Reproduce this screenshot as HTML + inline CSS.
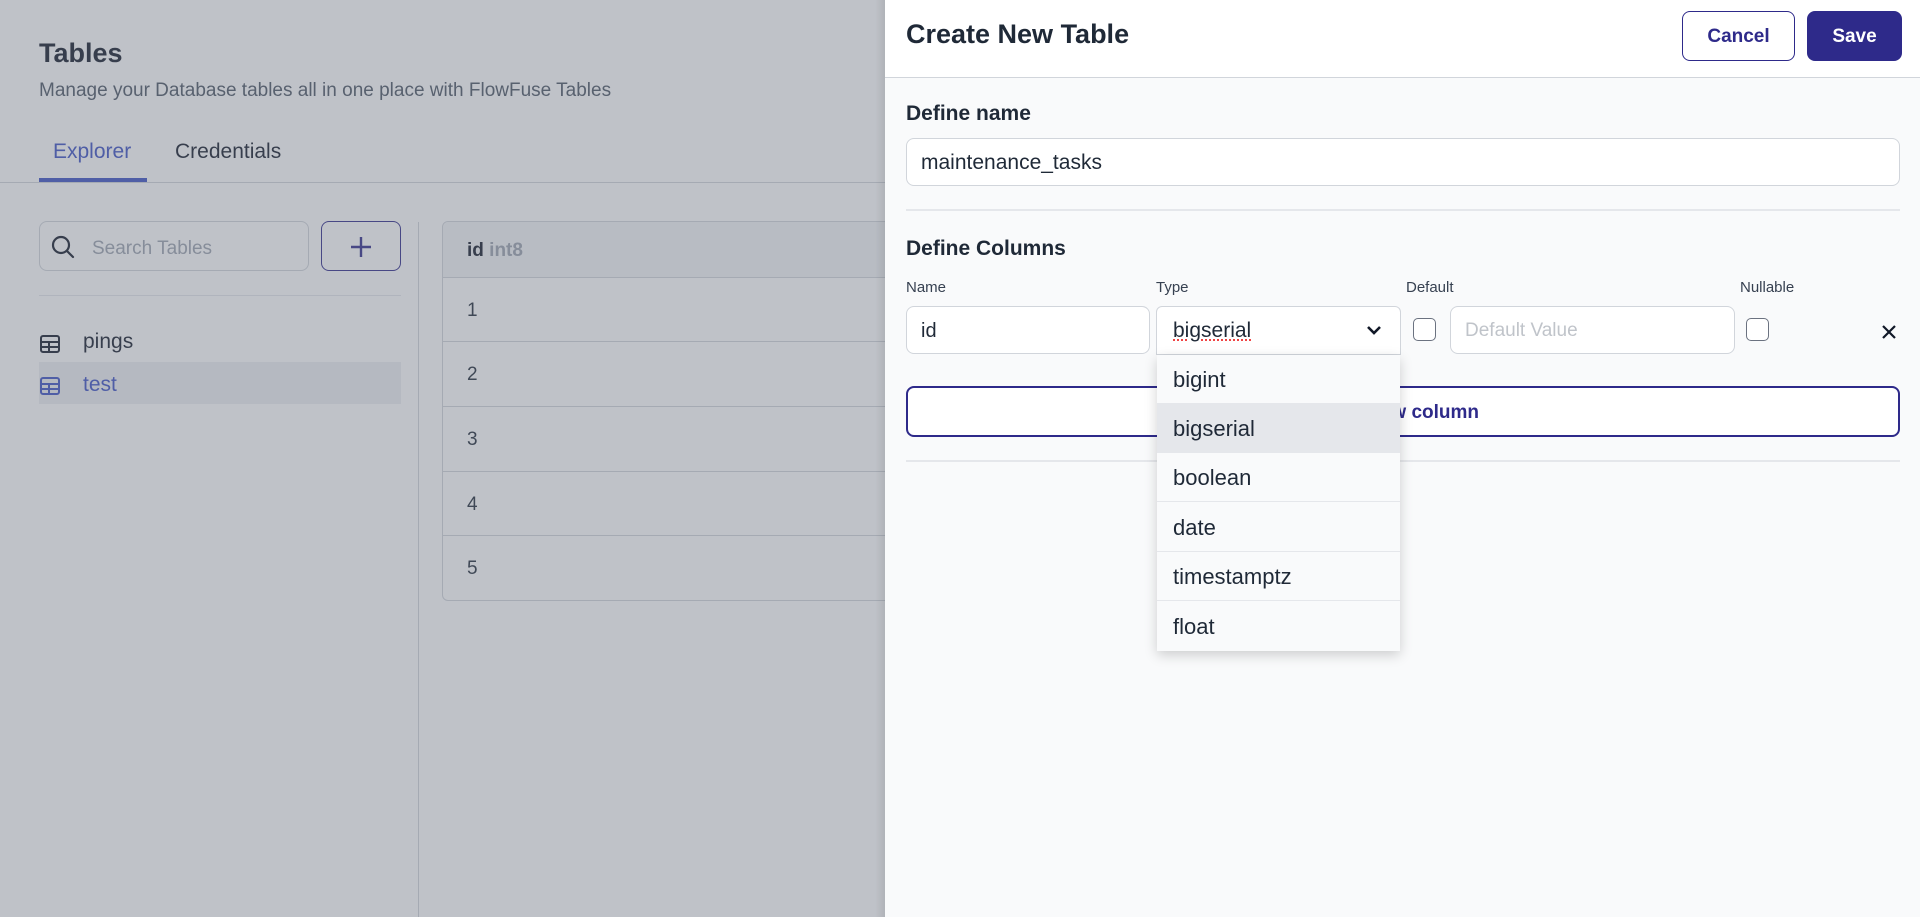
<!DOCTYPE html>
<html><head><meta charset="utf-8"><style>
*{box-sizing:border-box;margin:0;padding:0}
body{width:1920px;height:917px;overflow:hidden;position:relative;background:#fff;font-family:"Liberation Sans",sans-serif;color:#1f2937}
.a{position:absolute}
.ov{position:absolute;left:0;top:0;width:885px;height:917px;background:rgba(107,114,128,0.43)}
.inp{position:absolute;background:#fff;border:1px solid #d1d5db;border-radius:6px}
.row{position:absolute;left:442px;width:460px;border-top:1px solid #d1d5db;font-size:19px;padding-left:25px}
.dd{position:absolute;left:1157px;width:243px;height:49px;border-bottom:1px solid #e5e7eb;font-size:22px;padding-left:16px;line-height:50px;color:#1f2937}
</style></head><body>
<div class="a" style="left:39px;top:38px;font-size:27px;font-weight:bold;color:#111827">Tables</div>
<div class="a" style="left:39px;top:80px;font-size:19px;color:#4b5563">Manage your Database tables all in one place with FlowFuse Tables</div>
<div class="a" style="left:53px;top:140px;font-size:21px;color:#3b4fc4">Explorer</div>
<div class="a" style="left:175px;top:140px;font-size:21px;color:#111827">Credentials</div>
<div class="a" style="left:39px;top:178px;width:108px;height:4px;background:#3b4fc4"></div>
<div class="a" style="left:0;top:182px;width:885px;height:1px;background:#d1d5db"></div>
<div class="inp" style="left:39px;top:221px;width:270px;height:50px;border-radius:8px"></div>
<svg class="a" style="left:50px;top:234px" width="26" height="26" viewBox="0 0 26 26"><circle cx="11" cy="11" r="8" fill="none" stroke="#111827" stroke-width="2.2"/><path d="M17 17l6 6" stroke="#111827" stroke-width="2.2" stroke-linecap="round"/></svg>
<div class="a" style="left:92px;top:238px;font-size:19px;color:#9ca3af">Search Tables</div>
<div class="a" style="left:321px;top:221px;width:80px;height:50px;border:1.5px solid #2e2a8a;border-radius:8px;background:#fff"></div>
<svg class="a" style="left:348px;top:234px" width="26" height="26"><path d="M13 3v20M3 13h20" stroke="#2e2a8a" stroke-width="2.4"/></svg>
<div class="a" style="left:39px;top:295px;width:362px;height:1px;background:#e5e7eb"></div>
<svg class="a" style="left:40px;top:335px" width="20" height="18"><rect x="1" y="1" width="18" height="16" rx="2" fill="none" stroke="#111827" stroke-width="2"/><path d="M1 7h18M1 12h18M9 7v10" stroke="#111827" stroke-width="2"/></svg>
<div class="a" style="left:83px;top:330px;font-size:21px;color:#111827">pings</div>
<div class="a" style="left:39px;top:362px;width:362px;height:42px;background:#eef0f3"></div>
<svg class="a" style="left:40px;top:377px" width="20" height="18"><rect x="1" y="1" width="18" height="16" rx="2" fill="none" stroke="#3b4fc4" stroke-width="2"/><path d="M1 7h18M1 12h18M9 7v10" stroke="#3b4fc4" stroke-width="2"/></svg>
<div class="a" style="left:83px;top:373px;font-size:21px;color:#3b4fc4">test</div>
<div class="a" style="left:418px;top:222px;width:1px;height:695px;background:#d1d5db"></div>
<div class="a" style="left:442px;top:221px;width:460px;height:380px;border:1px solid #d1d5db;border-radius:6px;background:#fff"></div>
<div class="a" style="left:443px;top:222px;width:459px;height:55px;background:#f3f4f6;border-radius:6px 0 0 0"></div>
<div class="a" style="left:467px;top:240px;font-size:19px;font-weight:bold;color:#111827">id <span style="color:#9ca3af">int8</span></div>
<div class="row" style="top:277px;height:65px;line-height:66px">1</div>
<div class="row" style="top:341px;height:65px;line-height:66px">2</div>
<div class="row" style="top:406px;height:65px;line-height:66px">3</div>
<div class="row" style="top:471px;height:65px;line-height:66px">4</div>
<div class="row" style="top:535px;height:65px;line-height:66px">5</div>
<div class="ov"></div>
<div class="a" style="left:875px;top:0;width:10px;height:917px;background:linear-gradient(90deg,rgba(0,0,0,0),rgba(0,0,0,0.08))"></div>
<div class="a" style="left:885px;top:0;width:1035px;height:917px;background:#f9fafb"></div>
<div class="a" style="left:885px;top:0;width:1035px;height:78px;background:#fff;border-bottom:1.5px solid #d1d5db"></div>
<div class="a" style="left:906px;top:19px;font-size:27px;font-weight:bold;color:#1f2937">Create New Table</div>
<div class="a" style="left:1682px;top:11px;width:113px;height:50px;border:1.5px solid #2e2a8a;border-radius:8px;background:#fff;color:#2e2a8a;font-weight:bold;font-size:19px;text-align:center;line-height:50px">Cancel</div>
<div class="a" style="left:1807px;top:11px;width:95px;height:50px;border-radius:8px;background:#2e2a8a;color:#fff;font-weight:bold;font-size:19px;text-align:center;line-height:52px">Save</div>
<div class="a" style="left:906px;top:102px;font-size:21px;font-weight:bold;color:#1f2937">Define name</div>
<div class="inp" style="left:906px;top:138px;width:994px;height:48px;border-radius:8px;font-size:21px;padding-left:14px;line-height:48px;color:#1f2937">maintenance_tasks</div>
<div class="a" style="left:906px;top:209px;width:994px;height:2px;background:#e5e7eb"></div>
<div class="a" style="left:906px;top:237px;font-size:21px;font-weight:bold;color:#1f2937">Define Columns</div>
<div class="a" style="left:906px;top:279px;font-size:15px;color:#374151">Name</div>
<div class="a" style="left:1156px;top:279px;font-size:15px;color:#374151">Type</div>
<div class="a" style="left:1406px;top:279px;font-size:15px;color:#374151">Default</div>
<div class="a" style="left:1740px;top:279px;font-size:15px;color:#374151">Nullable</div>
<div class="inp" style="left:906px;top:306px;width:244px;height:48px;border-radius:8px;font-size:20px;padding-left:14px;line-height:48px">id</div>
<div class="inp" style="left:1156px;top:306px;width:245px;height:49px;border-radius:6px 6px 0 0;font-size:21px;padding-left:16px;line-height:48px"><span style="text-decoration:underline dotted #ef4444">bigserial</span></div>
<svg class="a" style="left:1365px;top:322px" width="18" height="16"><path d="M3 5l6 6 6-6" fill="none" stroke="#111827" stroke-width="2.6"/></svg>
<div class="a" style="left:1413px;top:318px;width:23px;height:23px;border:1.5px solid #6b7280;border-radius:5px;background:#fff"></div>
<div class="inp" style="left:1450px;top:306px;width:285px;height:48px;border-radius:8px;font-size:19px;padding-left:14px;line-height:48px;color:#c0c4ca">Default Value</div>
<div class="a" style="left:1746px;top:318px;width:23px;height:23px;border:1.5px solid #6b7280;border-radius:5px;background:#fff"></div>
<svg class="a" style="left:1880px;top:323px" width="18" height="18"><path d="M3 3l12 12M15 3L3 15" stroke="#111827" stroke-width="2.2"/></svg>
<div class="a" style="left:906px;top:386px;width:994px;height:51px;border:2px solid #2e2a8a;border-radius:8px;background:#fff;text-align:center;line-height:49px;font-size:19px;font-weight:bold;color:#2e2a8a">Add new column</div>
<div class="a" style="left:906px;top:460px;width:994px;height:2px;background:#e5e7eb"></div>
<div class="a" style="left:1157px;top:355px;width:243px;height:296px;background:#f9fafb;box-shadow:0 4px 12px rgba(0,0,0,0.18)"></div>
<div class="dd" style="top:355px">bigint</div>
<div class="dd" style="top:404px;background:#e5e7eb">bigserial</div>
<div class="dd" style="top:453px">boolean</div>
<div class="dd" style="top:503px">date</div>
<div class="dd" style="top:552px">timestamptz</div>
<div class="dd" style="top:602px;border-bottom:none">float</div>
</body></html>
